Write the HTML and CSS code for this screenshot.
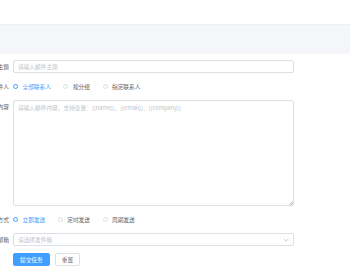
FILE: index.html
```html
<!DOCTYPE html>
<html lang="zh">
<head>
    <meta charset="UTF-8">
    <title>发送邮件任务</title>
    <link rel="stylesheet" href="styles.css">
</head>
<body>
    <div class="topbar"></div>
    <div class="tabbar"></div>

    <!-- Task form -->
    <form class="task-form">
        <label class="form-label">主题</label>
        <div class="form-field">
            <input class="text-input" type="text" placeholder="请输入邮件主题">
        </div>

        <label class="form-label">收件人</label>
        <div class="form-field radio-group">
            <span class="radio checked"><i class="dot"></i>全部联系人</span>
            <span class="radio"><i class="dot"></i>按分组</span>
            <span class="radio"><i class="dot"></i>指定联系人</span>
        </div>

        <label class="form-label">邮件内容</label>
        <div class="form-field area-wrap">
            <textarea class="text-area" placeholder="请输入邮件内容，支持变量：{{name}}、{{email}}、{{company}}"></textarea>
            <svg class="grip" width="4" height="4" viewBox="0 0 4 4">
                <path d="M0.5 3.8 L3.8 0.5 M2 3.8 L3.8 2" stroke="#909399" stroke-width="0.7"/>
            </svg>
        </div>

        <label class="form-label">发送方式</label>
        <div class="form-field radio-group">
            <span class="radio checked"><i class="dot"></i>立即发送</span>
            <span class="radio"><i class="dot"></i>定时发送</span>
            <span class="radio"><i class="dot"></i>周期发送</span>
        </div>

        <label class="form-label">发件邮箱</label>
        <div class="form-field">
            <div class="select">
                <span class="select-placeholder">请选择发件箱</span>
                <svg class="arrow" width="6" height="4" viewBox="0 0 6 4">
                    <path d="M0.6 0.8 L3 3.2 L5.4 0.8" fill="none" stroke="#c0c4cc" stroke-width="0.8"/>
                </svg>
            </div>
        </div>

        <span></span>
        <div class="form-field buttons">
            <button type="button" class="btn btn-primary">提交任务</button>
            <button type="button" class="btn">重置</button>
        </div>
    </form>
</body>
</html>
```

FILE: styles.css
```css
* {
    margin: 0;
    padding: 0;
    box-sizing: border-box;
}

body {
    background: #fff;
    font-family: "Noto Sans CJK SC", "Noto Sans", sans-serif;
    font-size: 5.7px;
    color: #606266;
    overflow: hidden;
}

.topbar {
    height: 24px;
}

/* Grey tab strip */
.tabbar {
    height: 28px;
    background: #f5f6fa;
    border-top: 1px solid #eef0f4;
    box-shadow: 0 1px 2px rgba(0, 0, 0, 0.08);
}

/* Form grid */
.task-form {
    display: grid;
    grid-template-columns: 40px 281px;
    column-gap: 4px;
    row-gap: 7px;
    margin-left: -31px;
    padding-top: 8px;
}

.form-label {
    height: 13px;
    line-height: 13px;
    text-align: right;
    white-space: nowrap;
    color: #606266;
}

.form-field {
    min-height: 13px;
}

.text-input,
.select {
    width: 100%;
    height: 13px;
    border: 1px solid #dcdfe6;
    border-radius: 2px;
    padding: 0 4px;
    font-family: inherit;
    font-size: 5.7px;
    color: #606266;
    outline: none;
    background: #fff;
}

.text-input::placeholder,
.text-area::placeholder {
    color: #c0c4cc;
}

.area-wrap {
    position: relative;
}

.text-area {
    display: block;
    width: 100%;
    height: 106px;
    border: 1px solid #dcdfe6;
    border-radius: 2px;
    padding: 3px 4px;
    font-family: inherit;
    font-size: 5.7px;
    line-height: 1.5;
    resize: none;
    outline: none;
}

/* Resize handle */
.grip {
    position: absolute;
    right: 1px;
    bottom: 1.5px;
}

/* Radios */
.radio-group {
    display: flex;
    align-items: center;
    height: 13px;
}

.radio {
    display: inline-flex;
    align-items: center;
    gap: 4.5px;
    margin-right: 12.5px;
    color: #606266;
    white-space: nowrap;
}

.dot {
    width: 5px;
    height: 5px;
    border: 0.8px solid #dcdfe6;
    border-radius: 50%;
    background: #fff;
}

.radio.checked {
    color: #409eff;
}

.radio.checked .dot {
    border: 1.6px solid #409eff;
    background: #fff;
}

/* Select */
.select {
    display: flex;
    align-items: center;
    justify-content: space-between;
}

.select-placeholder {
    color: #c0c4cc;
}

/* Buttons */
.buttons {
    display: flex;
    gap: 5px;
}

.btn {
    height: 13px;
    padding: 0 6px;
    border: 1px solid #dcdfe6;
    border-radius: 2px;
    background: #fff;
    color: #606266;
    font-family: inherit;
    font-size: 5.7px;
}

.btn-primary {
    background: #409eff;
    border-color: #409eff;
    color: #fff;
}
```
